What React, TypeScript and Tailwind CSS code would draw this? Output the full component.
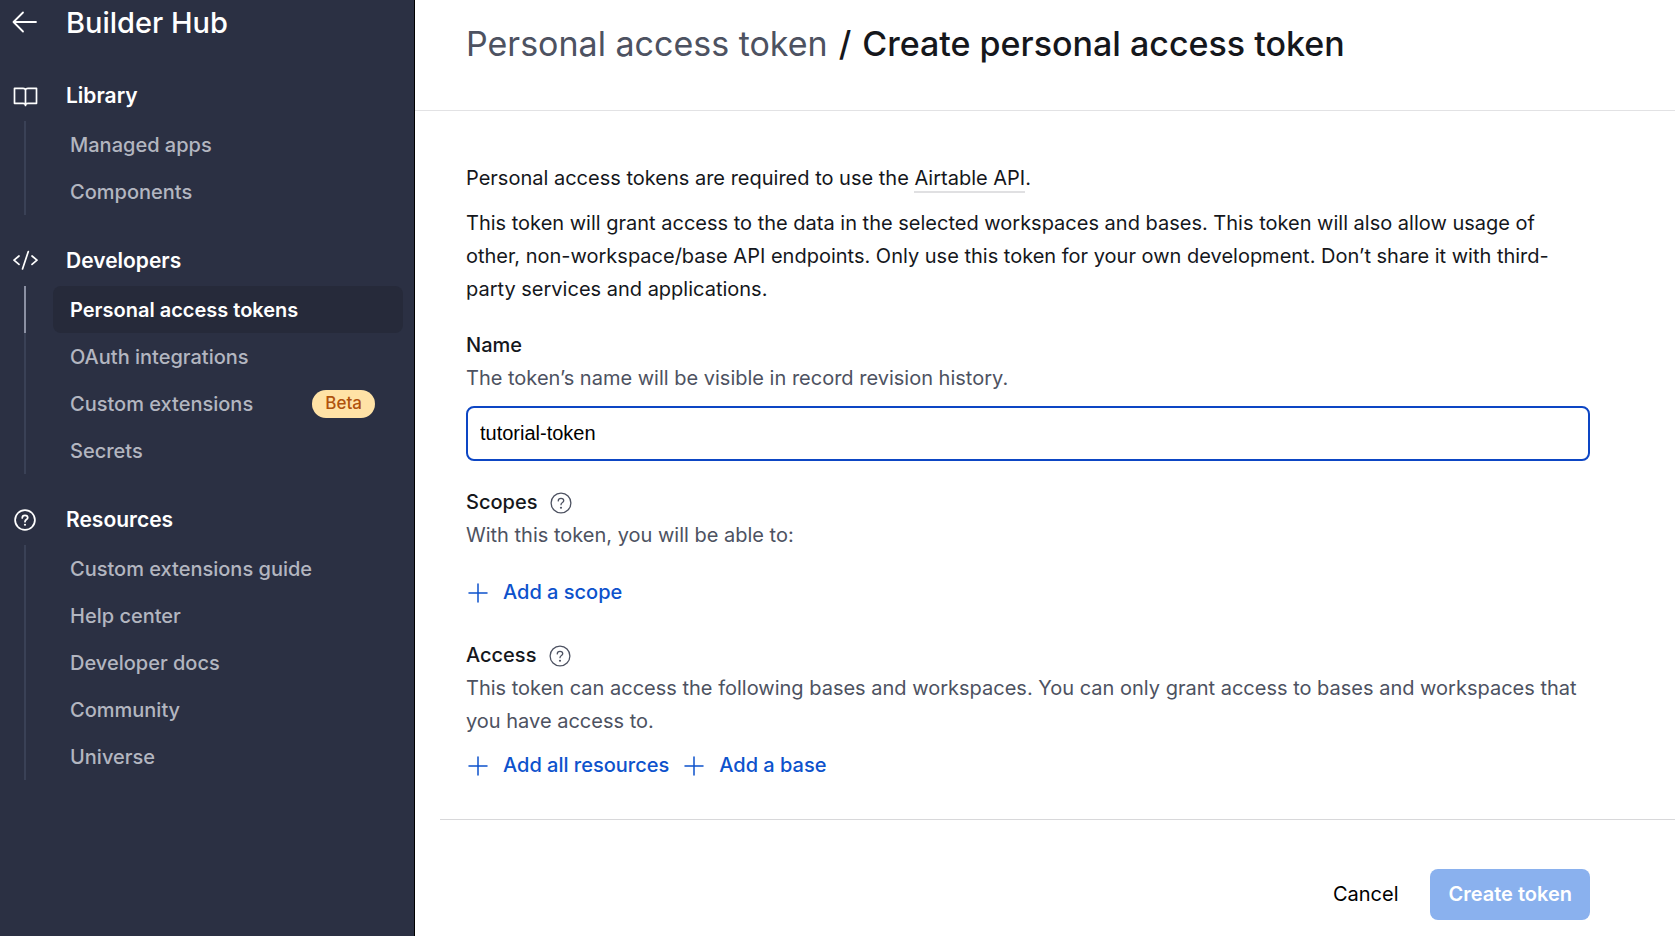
import { useState, type ReactNode } from "react";

interface NavItem {
	label: string;
	active?: boolean;
	badge?: string;
}

interface NavSection {
	title: string;
	icon: ReactNode;
	items: NavItem[];
}

function ArrowLeftIcon() {
	return (
		<svg width="26" height="26" viewBox="0 0 26 26" fill="none" stroke="currentColor" strokeWidth="1.8" strokeLinecap="round" strokeLinejoin="round" aria-hidden="true">
			<path d="M24 12H1.500M11 2.500 1.500 12l9.500 9.500" />
		</svg>
	);
}

function BookIcon() {
	return (
		<svg width="26" height="26" viewBox="0 0 26 26" fill="none" stroke="currentColor" strokeWidth="1.7" strokeLinejoin="round" strokeLinecap="round" aria-hidden="true">
			<path d="M13.500 7.300C13.500 5.800 12.200 5.300 11 5.300H2.500v15h8.500c1.500 0 2.500.6 2.500 2.200 0-1.600 1-2.200 2.500-2.200h8.500v-15H16c-1.200 0-2.500.5-2.500 2v14.500" />
		</svg>
	);
}

function CodeIcon() {
	return (
		<svg width="26" height="26" viewBox="0 0 26 26" fill="none" stroke="currentColor" strokeWidth="1.7" strokeLinejoin="round" strokeLinecap="round" aria-hidden="true">
			<path d="M7 8 2 12.200l5 4.200M20 8l5 4.200-5 4.200M16.300 3.500l-5.800 17.500" />
		</svg>
	);
}

function QuestionIcon({ size = 24, stroke = 1.6 }: { size?: number; stroke?: number }) {
	return (
		<svg width={size} height={size} viewBox="0 0 24 24" fill="none" stroke="currentColor" strokeWidth={stroke} strokeLinecap="round" strokeLinejoin="round" aria-hidden="true">
			<circle cx="12" cy="12" r="10.800" />
			<path d="M9 9.700c0-1.700 1.400-2.800 3-2.800s3 1.100 3 2.700c0 1.900-3 2-3 4.200" />
			<circle cx="12" cy="17.200" r="1.200" fill="currentColor" stroke="none" />
		</svg>
	);
}

function PlusIcon() {
	return (
		<svg width="24" height="24" viewBox="0 0 24 24" fill="none" stroke="currentColor" strokeWidth="1.5" strokeLinecap="round" aria-hidden="true">
			<path d="M12 3v18M3 12h18" />
		</svg>
	);
}

const SECTIONS: NavSection[] = [
	{
		title: "Library",
		icon: <BookIcon />,
		items: [{ label: "Managed apps" }, { label: "Components" }],
	},
	{
		title: "Developers",
		icon: <CodeIcon />,
		items: [
			{ label: "Personal access tokens", active: true },
			{ label: "OAuth integrations" },
			{ label: "Custom extensions", badge: "Beta" },
			{ label: "Secrets" },
		],
	},
	{
		title: "Resources",
		icon: <QuestionIcon size={22} stroke={1.9} />,
		items: [
			{ label: "Custom extensions guide" },
			{ label: "Help center" },
			{ label: "Developer docs" },
			{ label: "Community" },
			{ label: "Universe" },
		],
	},
];

function Sidebar() {
	return (
		<aside className="w-[415px] shrink-0 border-r border-black bg-[#2b3043] text-white">
			<div className="flex h-[46px] items-center">
				<a href="#back" aria-label="Back" className="flex w-[66px] pl-3">
					<ArrowLeftIcon />
				</a>
				<h2 className="text-[29px] font-medium">Builder Hub</h2>
			</div>
			<nav className="mt-6 flex flex-col gap-5">
				{SECTIONS.map((section) => (
					<section key={section.title}>
						<div className="flex h-[51px] items-center">
							<span className="flex w-[66px]">
								<span className="ml-3 flex w-[26px] justify-center">{section.icon}</span>
							</span>
							<h3 className="text-[21px] font-semibold">{section.title}</h3>
						</div>
						<ul className="pl-6">
							{section.items.map((item) => (
								<li
									key={item.label}
									className={`border-l-2 pr-[11px] pl-[27px] ${
										item.active ? "border-[#8b90a3]" : "border-[#3a4156]"
									}`}
								>
									<a
										href="#nav"
										className={`flex h-[47px] items-center justify-between rounded-lg pr-7 pl-[17px] text-xl ${
											item.active
												? "bg-[#262a3a] font-semibold text-white"
												: "font-medium text-[#b3b6c0]"
										}`}
									>
										{item.label}
										{item.badge && (
											<span className="flex h-7 items-center rounded-full bg-[#ffe2a6] px-[13px] text-[17px] text-[#b0510c]">
												{item.badge}
											</span>
										)}
									</a>
								</li>
							))}
						</ul>
					</section>
				))}
			</nav>
		</aside>
	);
}

function AddButton({ children }: { children: ReactNode }) {
	return (
		<button type="button" className="flex items-center gap-[13px] font-medium text-[#0d52cc]">
			<PlusIcon />
			{children}
		</button>
	);
}

export default function App() {
	const [name, setName] = useState("tutorial-token");

	return (
		<div className="flex min-h-screen bg-white font-['Inter',sans-serif] text-[#15171c]">
			<Sidebar />
			<main className="min-w-0 flex-1 text-xl leading-[33px]">
				<header className="flex h-[111px] border-b border-[#e2e2e4] pt-[22px] pl-[51px]">
					<h1 className="text-[34px] leading-[44px] font-medium">
						<span className="font-normal text-[#4d5261]">Personal access token</span>
						<span className="mx-[11px]">/</span>
						Create personal access token
					</h1>
				</header>

				<form className="pt-[51px]" onSubmit={(e) => e.preventDefault()}>
					<div className="pr-[85px] pl-[51px]">
						<p>
							Personal access tokens are required to use the{" "}
							<a href="#api" className="border-b-2 border-[#e0e0e2] pb-px">
								Airtable API
							</a>
							.
						</p>
						<p className="mt-3">
							This token will grant access to the data in the selected workspaces and bases. This
							token will also allow usage of other, non-workspace/base API endpoints. Only use this
							token for your own development. Don’t share it with third-party services and
							applications.
						</p>

						<label htmlFor="token-name" className="mt-[23px] block font-medium">
							Name
						</label>
						<p className="text-[#4d5261]">The token’s name will be visible in record revision history.</p>
						<input
							id="token-name"
							type="text"
							value={name}
							onChange={(e) => setName(e.target.value)}
							className="mt-[11px] block h-[55px] w-full rounded-lg border-2 border-[#0d46c4] px-3 font-['Liberation_Sans',sans-serif] text-black outline-none"
						/>

						<div className="mt-[25px] flex items-center gap-[13px]">
							<h2 className="font-medium">Scopes</h2>
							<button type="button" aria-label="About scopes" className="text-[#4d5261]">
								<QuestionIcon size={22} stroke={1.4} />
							</button>
						</div>
						<p className="text-[#4d5261]">With this token, you will be able to:</p>
						<div className="mt-6 flex">
							<AddButton>Add a scope</AddButton>
						</div>

						<div className="mt-[30px] flex items-center gap-[13px]">
							<h2 className="font-medium">Access</h2>
							<button type="button" aria-label="About access" className="text-[#4d5261]">
								<QuestionIcon size={22} stroke={1.4} />
							</button>
						</div>
						<p className="text-[#4d5261]">
							This token can access the following bases and workspaces. You can only grant access to
							bases and workspaces that you have access to.
						</p>
						<div className="mt-[11px] flex gap-[13px]">
							<AddButton>Add all resources</AddButton>
							<AddButton>Add a base</AddButton>
						</div>
					</div>

					<div className="mt-[37px] ml-[25px] flex justify-end gap-8 border-t border-[#d8d8da] pt-[49px] pr-[85px]">
						<button type="button" className="text-black">
							Cancel
						</button>
						<button
							type="submit"
							className="h-[51px] rounded-lg bg-[#8ab1ee] px-[18px] font-semibold text-white"
						>
							Create token
						</button>
					</div>
				</form>
			</main>
		</div>
	);
}
